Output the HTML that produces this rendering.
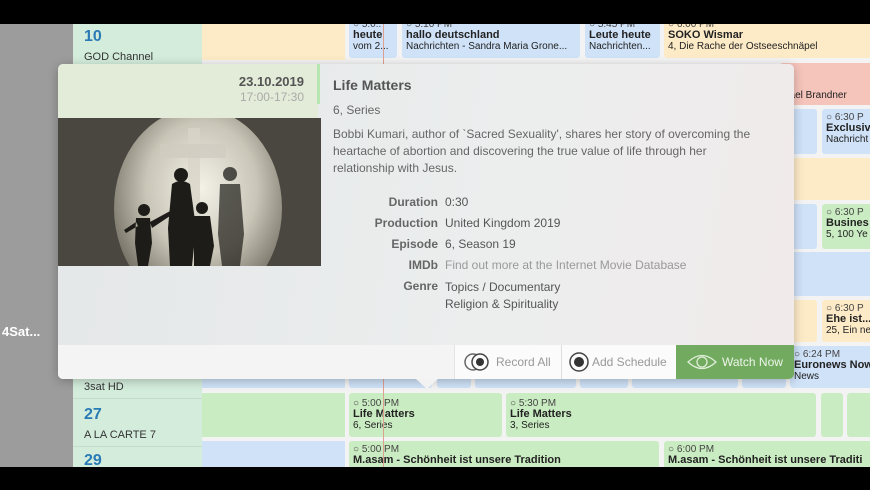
<!DOCTYPE html>
<html><head><meta charset="utf-8"><style>
*{margin:0;padding:0;box-sizing:border-box}
body{width:870px;height:490px;overflow:hidden;background:#000;font-family:"Liberation Sans",sans-serif;position:relative}
.a{position:absolute}
.c{position:absolute;border-radius:3px;font-size:10px;color:#222;padding:3px 4px;overflow:hidden;white-space:nowrap;line-height:11px}
.c b{font-size:11px;display:block}
.bl{background:#cfe2f8}.ye{background:#fdebc7}.gr{background:#caecc2}.rd{background:#f5c4bb}
.t{color:#444}
.lab{position:absolute;left:330px;width:108px;text-align:right;font-size:12px;color:#666;font-weight:bold;z-index:5}
.val{position:absolute;left:445px;font-size:12px;color:#555;z-index:5}
</style></head><body>
<div class="a" style="left:0;top:24px;width:870px;height:443px;background:#f3f3f3"></div>
<div class="a" style="left:0;top:24px;width:73px;height:443px;background:#9c9c9c"></div>
<div class="a" style="left:2px;top:324px;color:#fff;font-size:13px;font-weight:bold">4Sat...</div>
<div class="a" style="left:73px;top:24px;width:129px;height:443px;background:#d3ecdb"></div>
<div class="a" style="left:84px;top:28px;font-size:16px;font-weight:bold;color:#2a7bb5">10</div>
<div class="a" style="left:84px;top:51px;font-size:11px;color:#333">GOD Channel</div>
<div class="a" style="left:84px;top:381px;font-size:11px;color:#333">3sat HD</div>
<div class="a" style="left:73px;top:398px;width:129px;height:1px;background:#c4dccb"></div>
<div class="a" style="left:84px;top:406px;font-size:16px;font-weight:bold;color:#2a7bb5">27</div>
<div class="a" style="left:84px;top:429px;font-size:11px;color:#333">A LA CARTE 7</div>
<div class="a" style="left:73px;top:446px;width:129px;height:1px;background:#c4dccb"></div>
<div class="a" style="left:84px;top:452px;font-size:16px;font-weight:bold;color:#2a7bb5">29</div>
<!-- top row -->
<div class="c ye" style="left:202px;top:24px;width:143px;height:36px;border-radius:0"></div>
<div class="c bl" style="left:349px;top:16px;width:48px;height:42px"><span class="t">○ 5:0..</span><b>heute</b>vom 2...</div>
<div class="c bl" style="left:402px;top:16px;width:178px;height:42px"><span class="t">○ 5:10 PM</span><b>hallo deutschland</b>Nachrichten - Sandra Maria Grone...</div>
<div class="c bl" style="left:585px;top:16px;width:75px;height:42px"><span class="t">○ 5:45 PM</span><b>Leute heute</b>Nachrichten...</div>
<div class="c ye" style="left:664px;top:16px;width:210px;height:42px"><span class="t">○ 6:00 PM</span><b>SOKO Wismar</b>4, Die Rache der Ostseeschnäpel</div>
<!-- right column -->
<div class="c rd" style="left:780px;top:63px;width:94px;height:42px;padding-top:27px">hael Brandner</div>
<div class="c bl" style="left:780px;top:109px;width:37px;height:45px"></div>
<div class="c bl" style="left:822px;top:109px;width:52px;height:45px"><span class="t">○ 6:30 P</span><b>Exclusiv</b>Nachricht</div>
<div class="c ye" style="left:780px;top:158px;width:94px;height:42px"></div>
<div class="c bl" style="left:780px;top:204px;width:37px;height:45px"></div>
<div class="c gr" style="left:822px;top:204px;width:52px;height:45px"><span class="t">○ 6:30 P</span><b>Busines</b>5, 100 Ye</div>
<div class="c bl" style="left:780px;top:252px;width:94px;height:44px"></div>
<div class="c ye" style="left:780px;top:300px;width:37px;height:42px"></div>
<div class="c ye" style="left:822px;top:300px;width:52px;height:42px"><span class="t">○ 6:30 P</span><b>Ehe ist...</b>25, Ein ne</div>
<div class="c bl" style="left:790px;top:346px;width:84px;height:42px"><span class="t">○ 6:24 PM</span><b>Euronews Now</b>News</div>
<!-- news row -->
<div class="c bl" style="left:202px;top:375px;width:143px;height:13px;border-radius:0"></div>
<div class="c bl" style="left:349px;top:375px;width:83px;height:13px"></div>
<div class="c bl" style="left:437px;top:375px;width:34px;height:13px"></div>
<div class="c bl" style="left:475px;top:375px;width:101px;height:13px"></div>
<div class="c bl" style="left:580px;top:375px;width:48px;height:13px"></div>
<div class="c bl" style="left:632px;top:375px;width:106px;height:13px"></div>
<div class="c bl" style="left:742px;top:375px;width:44px;height:13px"></div>
<!-- life matters row -->
<div class="c gr" style="left:202px;top:393px;width:143px;height:44px;border-radius:0"></div>
<div class="c gr" style="left:349px;top:393px;width:153px;height:44px;padding-top:5px"><span class="t">○ 5:00 PM</span><b>Life Matters</b>6, Series</div>
<div class="c gr" style="left:506px;top:393px;width:310px;height:44px;padding-top:5px"><span class="t">○ 5:30 PM</span><b>Life Matters</b>3, Series</div>
<div class="c gr" style="left:821px;top:393px;width:22px;height:44px"></div>
<div class="c gr" style="left:847px;top:393px;width:27px;height:44px"></div>
<div class="c bl" style="left:202px;top:441px;width:143px;height:30px;border-radius:0"></div>
<div class="c gr" style="left:349px;top:441px;width:310px;height:30px;padding-top:3px"><span class="t">○ 5:00 PM</span><b>M.asam - Schönheit ist unsere Tradition</b></div>
<div class="c gr" style="left:664px;top:441px;width:210px;height:30px;padding-top:3px"><span class="t">○ 6:00 PM</span><b>M.asam - Schönheit ist unsere Traditi</b></div>
<div class="a" style="left:383px;top:24px;width:1px;height:443px;background:#e0a090"></div>
<!-- popover -->
<div class="a" style="left:58px;top:64px;width:736px;height:315px;background:linear-gradient(100deg,#e4e7e8,#eceeee 60%,#f0eaea);border-radius:5px;box-shadow:0 2px 10px rgba(0,0,0,.25);overflow:hidden;z-index:4">
 <div class="a" style="left:0;top:0;width:260px;height:54px;background:#e3ecd8"></div>
 <div class="a" style="left:259px;top:0;width:3px;height:40px;background:#b8e6b0"></div>
 <div class="a" style="left:0;top:10px;width:246px;text-align:right;font-size:13px;font-weight:bold;color:#555">23.10.2019</div>
 <div class="a" style="left:0;top:26px;width:246px;text-align:right;font-size:12px;color:#aaa">17:00-17:30</div>
 <svg class="a" style="left:0;top:54px" width="263" height="148" viewBox="0 0 263 148">
  <defs><radialGradient id="g" cx="0.52" cy="0.4" r="0.6"><stop offset="0" stop-color="#f4f2e8"/><stop offset="0.55" stop-color="#c9c6b8"/><stop offset="1" stop-color="#706c60"/></radialGradient></defs>
  <rect width="263" height="148" fill="#4a4740"/>
  <ellipse cx="140" cy="90" rx="84" ry="100" fill="url(#g)"/>
  <rect x="130" y="10" width="12" height="138" fill="#d8d5c8" opacity=".8"/>
  <rect x="102" y="26" width="66" height="14" fill="#cfccc0" opacity=".8"/>
  <g fill="#1e1c18">
   <circle cx="123" cy="57" r="7"/><path d="M114 66 Q123 60 132 66 L138 110 L134 148 L112 148 L110 110 Z"/>
   <circle cx="144" cy="90" r="6"/><path d="M136 98 h16 l4 30 l-4 20 h-16 z"/>
   <circle cx="86" cy="92" r="6"/><path d="M78 100 h14 l2 25 l-4 23 h-10 l-3 -23 z M92 104 L114 92 L115 96 L94 110z M78 104 L66 112 L68 115 L80 108z"/>
   <circle cx="172" cy="56" r="7" opacity=".75"/><path d="M162 66 h20 l4 50 l-4 32 h-18 l-4 -32 z" opacity=".7"/>
  </g>
 </svg>
 <div class="a" style="left:275px;top:13px;font-size:14px;font-weight:bold;color:#555">Life Matters</div>
 <div class="a" style="left:275px;top:39px;font-size:12px;color:#666">6, Series</div>
 <div class="a" style="left:275px;top:62px;width:430px;font-size:12px;line-height:17px;color:#666">Bobbi Kumari, author of `Sacred Sexuality', shares her story of overcoming the heartache of abortion and discovering the true value of life through her relationship with Jesus.</div>
 <div class="a" style="left:0;top:281px;width:736px;height:34px;background:#f4f4f4"></div>
 <div class="a" style="left:396px;top:281px;width:222px;height:34px;background:#fbfbfb"></div>
 <div class="a" style="left:503px;top:281px;width:1px;height:34px;background:#ddd"></div>
 <div class="a" style="left:396px;top:281px;width:1px;height:34px;background:#e4e4e4"></div>
 <div class="a" style="left:618px;top:281px;width:118px;height:34px;background:#72aa60"></div>
 <svg class="a" style="left:404px;top:287px" width="30" height="22"><circle cx="11" cy="11" r="8" fill="none" stroke="#666" stroke-width="1.5"/><circle cx="18" cy="11" r="8" fill="#fbfbfb" stroke="#444" stroke-width="1.5"/><circle cx="18" cy="11" r="4" fill="#333"/></svg>
 <div class="a" style="left:438px;top:291px;font-size:12px;color:#999">Record All</div>
 <svg class="a" style="left:510px;top:287px" width="22" height="22"><circle cx="11" cy="11" r="9" fill="none" stroke="#444" stroke-width="1.5"/><circle cx="11" cy="11" r="5" fill="#333"/></svg>
 <div class="a" style="left:534px;top:291px;font-size:12px;color:#999">Add Schedule</div>
 <svg class="a" style="left:628px;top:288px" width="32" height="20"><path d="M2 10 Q16 -3 30 10 Q16 23 2 10Z" fill="none" stroke="#dfeed8" stroke-width="1.3"/><circle cx="16" cy="10" r="5" fill="none" stroke="#dfeed8" stroke-width="1.3"/></svg>
 <div class="a" style="left:664px;top:291px;font-size:12px;color:#eef6ea">Watch Now</div>
</div>
<div class="lab" style="top:195px">Duration</div><div class="val" style="top:195px">0:30</div>
<div class="lab" style="top:216px">Production</div><div class="val" style="top:216px">United Kingdom 2019</div>
<div class="lab" style="top:237px">Episode</div><div class="val" style="top:237px">6, Season 19</div>
<div class="lab" style="top:258px">IMDb</div><div class="val" style="top:258px;color:#999">Find out more at the Internet Movie Database</div>
<div class="lab" style="top:279px">Genre</div><div class="val" style="top:279px;line-height:17px">Topics / Documentary<br>Religion &amp; Spirituality</div>
<div class="a" style="left:416px;top:379px;width:0;height:0;border-left:11px solid transparent;border-right:11px solid transparent;border-top:10px solid #f2f2f2;z-index:4"></div>
<div class="a" style="left:0;top:0;width:870px;height:24px;background:#000;z-index:10"></div>
<div class="a" style="left:0;top:467px;width:870px;height:23px;background:#000;z-index:10"></div>
</body></html>
